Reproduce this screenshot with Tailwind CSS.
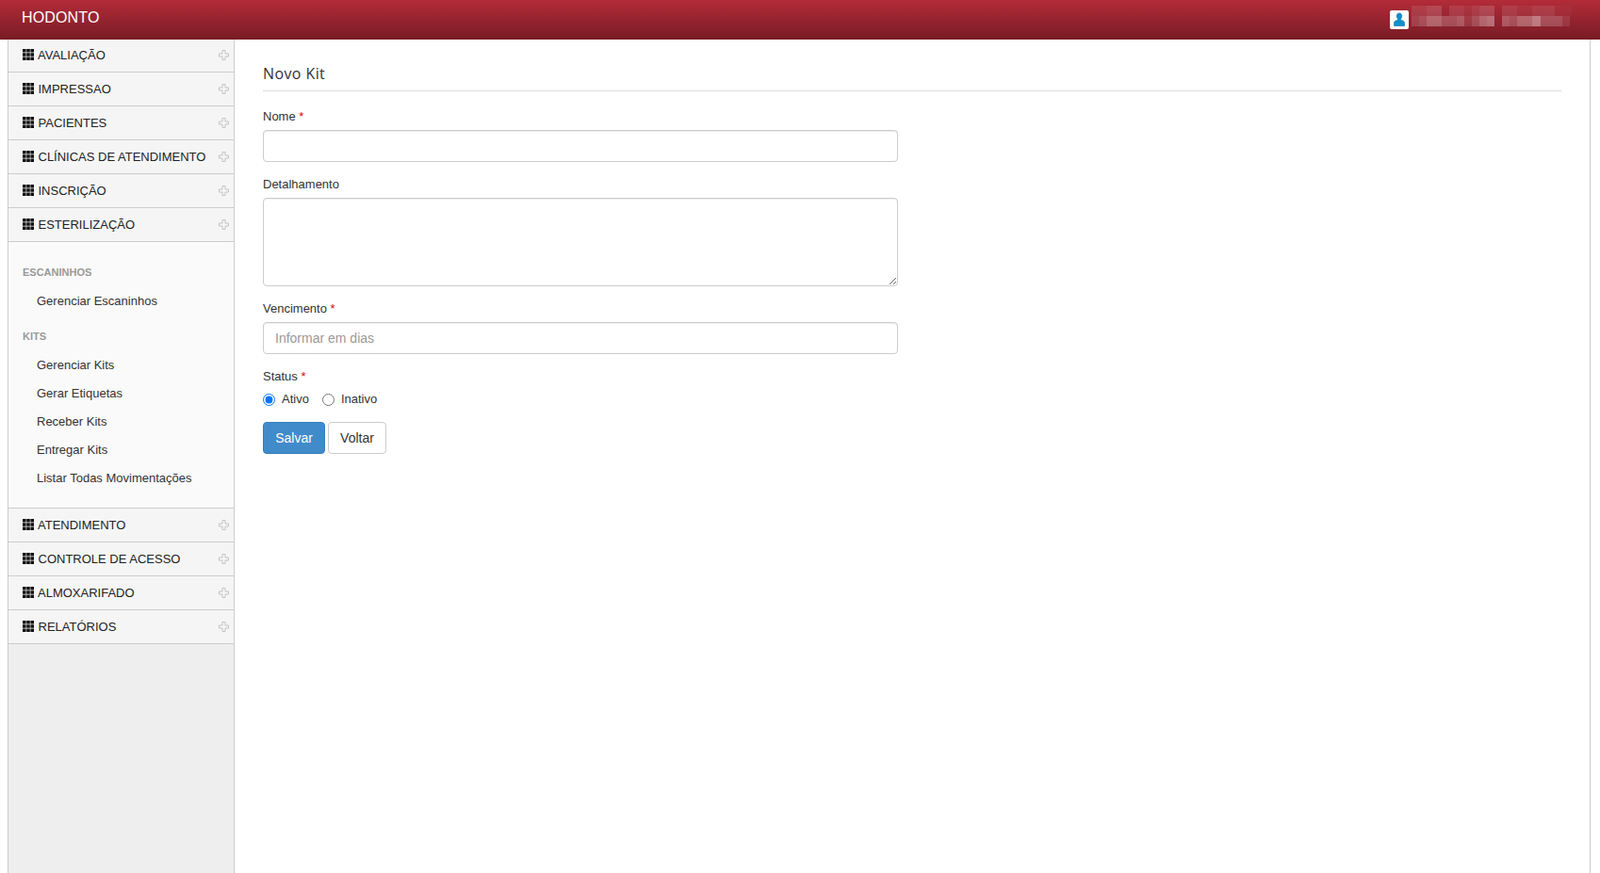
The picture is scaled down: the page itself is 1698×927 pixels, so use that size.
<!DOCTYPE html>
<html lang="pt-BR" class="h-full">
  <head>
    <meta charset="UTF-8" />
    <script src="https://cdn.jsdelivr.net/npm/@tailwindcss/browser@4"></script>
    <title>Novo Kit</title>
  </head>
  <body class="h-full overflow-hidden bg-white font-['Liberation_Sans',Arial,sans-serif] text-[13px] text-[#333]">
    <!-- top bar -->
    <header class="flex h-[42px] items-center justify-between bg-gradient-to-b from-[#b32b39] to-[#781c25] pl-[23px] pr-[30px]">
      <span class="mb-[4px] text-[16px] tracking-[0.15px] text-white">HODONTO</span>
      <div class="flex items-center gap-[3px]">
        <span class="flex h-5 w-5 items-center justify-center rounded-[2px] bg-white">
          <svg class="h-4 w-4" viewBox="0 0 16 16">
            <path d="M8 1c1.700 0 2.700 1.300 2.700 3 0 1.200-.5 2.300-1.200 3v1.200c2 .6 3.800 1.300 4 2.800v3.500H2.500V11c.2-1.500 2-2.200 4-2.800V7C5.800 6.300 5.300 5.200 5.300 4c0-1.700 1-3 2.700-3z" fill="#0f8fcf" stroke="#0b6ea3" stroke-width=".6" />
          </svg>
        </span>
        <!-- blurred user name -->
        <div class="mb-[8px] flex w-[170px] flex-col">
          <div class="flex h-[11px]">
            <i class="w-[16px] bg-white/10"></i><i class="w-[16px] bg-white/15"></i><i class="w-[8px]"></i><i class="w-[16px] bg-white/10"></i><i class="w-[8px] bg-white/5"></i><i class="w-[8px] bg-white/10"></i><i class="w-[16px] bg-white/15"></i><i class="w-[8px]"></i><i class="w-[16px] bg-white/10"></i><i class="w-[16px] bg-white/5"></i><i class="w-[24px] bg-white/10"></i><i class="w-[18px] bg-white/[.03]"></i>
          </div>
          <div class="flex h-[11px]">
            <i class="w-[8px] bg-white/15"></i><i class="w-[8px] bg-white/20"></i><i class="w-[16px] bg-white/30"></i><i class="w-[16px] bg-white/20"></i><i class="w-[8px] bg-white/25"></i><i class="w-[8px] bg-white/10"></i><i class="w-[8px] bg-white/20"></i><i class="w-[8px] bg-white/30"></i><i class="w-[8px] bg-white/35"></i><i class="w-[8px]"></i><i class="w-[8px] bg-white/25"></i><i class="w-[8px] bg-white/20"></i><i class="w-[16px] bg-white/30"></i><i class="w-[9px] bg-white/40"></i><i class="w-[7px] bg-white/20"></i><i class="w-[16px] bg-white/20"></i><i class="w-[8px] bg-white/10"></i>
          </div>
        </div>
      </div>
    </header>

    <div class="flex h-[885px] pl-2">
      <!-- sidebar -->
      <aside class="w-[241px] shrink-0 border-x border-[#ccc] bg-[#eee]">
        <nav>
          <a class="flex h-[35px] items-center justify-between border-b border-[#ccc] bg-[#f5f5f5] pl-[15px] pr-[5px] text-[13px] text-[#222]"><span class="flex items-center gap-[4px]"><svg class="mb-[2px] h-3 w-3" viewBox="0 0 12 12" fill="#111"><path d="M0 0h3.600v3.600H0zM4.200 0h3.600v3.600H4.200zM8.400 0H12v3.600H8.400zM0 4.200h3.600v3.600H0zM4.200 4.200h3.600v3.600H4.200zM8.400 4.200H12v3.600H8.400zM0 8.400h3.600V12H0zM4.200 8.400h3.600V12H4.200zM8.400 8.400H12V12H8.400z"/></svg>AVALIAÇÃO</span><svg class="mb-[1px] h-[11px] w-[11px]" viewBox="0 0 11 11" fill="none" stroke="#c4c4c4"><path d="M4 .5h3v3.500h3.500v3H7v3.500H4V7H.5V4H4z"/></svg></a>
          <a class="flex h-9 items-center justify-between border-b border-[#ccc] bg-[#f5f5f5] pl-[15px] pr-[5px] text-[13px] text-[#222]"><span class="flex items-center gap-[4.500px]"><svg class="mb-[2px] h-3 w-3" viewBox="0 0 12 12" fill="#111"><path d="M0 0h3.600v3.600H0zM4.200 0h3.600v3.600H4.200zM8.400 0H12v3.600H8.400zM0 4.200h3.600v3.600H0zM4.200 4.200h3.600v3.600H4.200zM8.400 4.200H12v3.600H8.400zM0 8.400h3.600V12H0zM4.200 8.400h3.600V12H4.200zM8.400 8.400H12V12H8.400z"/></svg>IMPRESSAO</span><svg class="mb-[1px] h-[11px] w-[11px]" viewBox="0 0 11 11" fill="none" stroke="#c4c4c4"><path d="M4 .5h3v3.500h3.500v3H7v3.500H4V7H.5V4H4z"/></svg></a>
          <a class="flex h-9 items-center justify-between border-b border-[#ccc] bg-[#f5f5f5] pl-[15px] pr-[5px] text-[13px] text-[#222]"><span class="flex items-center gap-[4.500px]"><svg class="mb-[2px] h-3 w-3" viewBox="0 0 12 12" fill="#111"><path d="M0 0h3.600v3.600H0zM4.200 0h3.600v3.600H4.200zM8.400 0H12v3.600H8.400zM0 4.200h3.600v3.600H0zM4.200 4.200h3.600v3.600H4.200zM8.400 4.200H12v3.600H8.400zM0 8.400h3.600V12H0zM4.200 8.400h3.600V12H4.200zM8.400 8.400H12V12H8.400z"/></svg>PACIENTES</span><svg class="mb-[1px] h-[11px] w-[11px]" viewBox="0 0 11 11" fill="none" stroke="#c4c4c4"><path d="M4 .5h3v3.500h3.500v3H7v3.500H4V7H.5V4H4z"/></svg></a>
          <a class="flex h-9 items-center justify-between border-b border-[#ccc] bg-[#f5f5f5] pl-[15px] pr-[5px] text-[13px] text-[#222]"><span class="flex items-center gap-[4.500px]"><svg class="mb-[2px] h-3 w-3" viewBox="0 0 12 12" fill="#111"><path d="M0 0h3.600v3.600H0zM4.200 0h3.600v3.600H4.200zM8.400 0H12v3.600H8.400zM0 4.200h3.600v3.600H0zM4.200 4.200h3.600v3.600H4.200zM8.400 4.200H12v3.600H8.400zM0 8.400h3.600V12H0zM4.200 8.400h3.600V12H4.200zM8.400 8.400H12V12H8.400z"/></svg>CLÍNICAS DE ATENDIMENTO</span><svg class="mb-[1px] h-[11px] w-[11px]" viewBox="0 0 11 11" fill="none" stroke="#c4c4c4"><path d="M4 .5h3v3.500h3.500v3H7v3.500H4V7H.5V4H4z"/></svg></a>
          <a class="flex h-9 items-center justify-between border-b border-[#ccc] bg-[#f5f5f5] pl-[15px] pr-[5px] text-[13px] text-[#222]"><span class="flex items-center gap-[4.500px]"><svg class="mb-[2px] h-3 w-3" viewBox="0 0 12 12" fill="#111"><path d="M0 0h3.600v3.600H0zM4.200 0h3.600v3.600H4.200zM8.400 0H12v3.600H8.400zM0 4.200h3.600v3.600H0zM4.200 4.200h3.600v3.600H4.200zM8.400 4.200H12v3.600H8.400zM0 8.400h3.600V12H0zM4.200 8.400h3.600V12H4.200zM8.400 8.400H12V12H8.400z"/></svg>INSCRIÇÃO</span><svg class="mb-[1px] h-[11px] w-[11px]" viewBox="0 0 11 11" fill="none" stroke="#c4c4c4"><path d="M4 .5h3v3.500h3.500v3H7v3.500H4V7H.5V4H4z"/></svg></a>
          <a class="flex h-9 items-center justify-between border-b border-[#ccc] bg-[#f5f5f5] pl-[15px] pr-[5px] text-[13px] text-[#222]"><span class="flex items-center gap-[4.500px]"><svg class="mb-[2px] h-3 w-3" viewBox="0 0 12 12" fill="#111"><path d="M0 0h3.600v3.600H0zM4.200 0h3.600v3.600H4.200zM8.400 0H12v3.600H8.400zM0 4.200h3.600v3.600H0zM4.200 4.200h3.600v3.600H4.200zM8.400 4.200H12v3.600H8.400zM0 8.400h3.600V12H0zM4.200 8.400h3.600V12H4.200zM8.400 8.400H12V12H8.400z"/></svg>ESTERILIZAÇÃO</span><svg class="mb-[1px] h-[11px] w-[11px]" viewBox="0 0 11 11" fill="none" stroke="#c4c4c4"><path d="M4 .5h3v3.500h3.500v3H7v3.500H4V7H.5V4H4z"/></svg></a>
        </nav>

        <!-- open submenu -->
        <div class="h-[283px] border-b border-[#ccc] bg-[#fafafa] pt-[25px] pl-[15px]">
          <p class="h-[15px] text-[11px] leading-[15px] font-bold text-[#999]">ESCANINHOS</p>
          <a class="mt-[8px] block h-[30px] pl-[15px] text-[13px] leading-[30px] text-[#333]">Gerenciar Escaninhos</a>
          <p class="mt-[15px] h-[15px] text-[11px] leading-[15px] font-bold text-[#999]">KITS</p>
          <a class="mt-[8px] block h-[30px] pl-[15px] text-[13px] leading-[30px] text-[#333]">Gerenciar Kits</a>
          <a class="block h-[30px] pl-[15px] text-[13px] leading-[30px] text-[#333]">Gerar Etiquetas</a>
          <a class="block h-[30px] pl-[15px] text-[13px] leading-[30px] text-[#333]">Receber Kits</a>
          <a class="block h-[30px] pl-[15px] text-[13px] leading-[30px] text-[#333]">Entregar Kits</a>
          <a class="block h-[30px] pl-[15px] text-[13px] leading-[30px] text-[#333]">Listar Todas Movimentações</a>
        </div>

        <nav>
          <a class="flex h-9 items-center justify-between border-b border-[#ccc] bg-[#f5f5f5] pl-[15px] pr-[5px] text-[13px] text-[#222]"><span class="flex items-center gap-[4px]"><svg class="mb-[2px] h-3 w-3" viewBox="0 0 12 12" fill="#111"><path d="M0 0h3.600v3.600H0zM4.200 0h3.600v3.600H4.200zM8.400 0H12v3.600H8.400zM0 4.200h3.600v3.600H0zM4.200 4.200h3.600v3.600H4.200zM8.400 4.200H12v3.600H8.400zM0 8.400h3.600V12H0zM4.200 8.400h3.600V12H4.200zM8.400 8.400H12V12H8.400z"/></svg>ATENDIMENTO</span><svg class="mb-[1px] h-[11px] w-[11px]" viewBox="0 0 11 11" fill="none" stroke="#c4c4c4"><path d="M4 .5h3v3.500h3.500v3H7v3.500H4V7H.5V4H4z"/></svg></a>
          <a class="flex h-9 items-center justify-between border-b border-[#ccc] bg-[#f5f5f5] pl-[15px] pr-[5px] text-[13px] text-[#222]"><span class="flex items-center gap-[4.500px]"><svg class="mb-[2px] h-3 w-3" viewBox="0 0 12 12" fill="#111"><path d="M0 0h3.600v3.600H0zM4.200 0h3.600v3.600H4.200zM8.400 0H12v3.600H8.400zM0 4.200h3.600v3.600H0zM4.200 4.200h3.600v3.600H4.200zM8.400 4.200H12v3.600H8.400zM0 8.400h3.600V12H0zM4.200 8.400h3.600V12H4.200zM8.400 8.400H12V12H8.400z"/></svg>CONTROLE DE ACESSO</span><svg class="mb-[1px] h-[11px] w-[11px]" viewBox="0 0 11 11" fill="none" stroke="#c4c4c4"><path d="M4 .5h3v3.500h3.500v3H7v3.500H4V7H.5V4H4z"/></svg></a>
          <a class="flex h-9 items-center justify-between border-b border-[#ccc] bg-[#f5f5f5] pl-[15px] pr-[5px] text-[13px] text-[#222]"><span class="flex items-center gap-[4px]"><svg class="mb-[2px] h-3 w-3" viewBox="0 0 12 12" fill="#111"><path d="M0 0h3.600v3.600H0zM4.200 0h3.600v3.600H4.200zM8.400 0H12v3.600H8.400zM0 4.200h3.600v3.600H0zM4.200 4.200h3.600v3.600H4.200zM8.400 4.200H12v3.600H8.400zM0 8.400h3.600V12H0zM4.200 8.400h3.600V12H4.200zM8.400 8.400H12V12H8.400z"/></svg>ALMOXARIFADO</span><svg class="mb-[1px] h-[11px] w-[11px]" viewBox="0 0 11 11" fill="none" stroke="#c4c4c4"><path d="M4 .5h3v3.500h3.500v3H7v3.500H4V7H.5V4H4z"/></svg></a>
          <a class="flex h-9 items-center justify-between border-b border-[#ccc] bg-[#f5f5f5] pl-[15px] pr-[5px] text-[13px] text-[#222]"><span class="flex items-center gap-[4.500px]"><svg class="mb-[2px] h-3 w-3" viewBox="0 0 12 12" fill="#111"><path d="M0 0h3.600v3.600H0zM4.200 0h3.600v3.600H4.200zM8.400 0H12v3.600H8.400zM0 4.200h3.600v3.600H0zM4.200 4.200h3.600v3.600H4.200zM8.400 4.200H12v3.600H8.400zM0 8.400h3.600V12H0zM4.200 8.400h3.600V12H4.200zM8.400 8.400H12V12H8.400z"/></svg>RELATÓRIOS</span><svg class="mb-[1px] h-[11px] w-[11px]" viewBox="0 0 11 11" fill="none" stroke="#c4c4c4"><path d="M4 .5h3v3.500h3.500v3H7v3.500H4V7H.5V4H4z"/></svg></a>
        </nav>
      </aside>

      <!-- content -->
      <main class="w-[1439px] shrink-0 border-r border-[#ccc] pl-[30px] pr-[30px] pt-[26px]">
        <h1 class="border-b border-[#ddd] pb-[8px] font-['Open_Sans',sans-serif] text-[16px] leading-[20px] tracking-[0.4px] text-[#333]">Novo Kit</h1>
        <form class="w-[674px] pt-[18px]">
          <label class="block h-[23px] leading-[18px]">Nome <span class="text-red-600">*</span></label>
          <input type="text" class="block h-[34px] w-full rounded border border-[#ccc] px-3 text-[14px] shadow-[inset_0_1px_1px_rgba(0,0,0,0.075)]" />
          <label class="mt-[15px] block h-[23px] leading-[18px]">Detalhamento</label>
          <textarea class="block h-[94px] w-full rounded border border-[#ccc] px-3 py-1.5 text-[14px] shadow-[inset_0_1px_1px_rgba(0,0,0,0.075)]"></textarea>
          <label class="mt-[15px] block h-[23px] leading-[18px]">Vencimento <span class="text-red-600">*</span></label>
          <input type="text" placeholder="Informar em dias" class="block h-[34px] w-full rounded border border-[#ccc] px-3 text-[14px] shadow-[inset_0_1px_1px_rgba(0,0,0,0.075)] placeholder:text-[#999]" />
          <label class="mt-[15px] block h-[20px] leading-[18px]">Status <span class="text-red-600">*</span></label>
          <div class="mt-[1px] flex h-[24px] items-center">
            <input type="radio" name="status" checked class="m-0 h-[13px] w-[13px]" />
            <span class="ml-[7px]">Ativo</span>
            <input type="radio" name="status" class="m-0 ml-[14px] h-[13px] w-[13px]" />
            <span class="ml-[7px]">Inativo</span>
          </div>
          <div class="mt-[12px] flex gap-[3px]">
            <button type="button" class="h-[34px] w-[66px] rounded border border-[#357ebd] bg-[#428bca] text-[14px] text-white">Salvar</button>
            <button type="button" class="h-[34px] w-[62px] rounded border border-[#ccc] bg-white text-[14px] text-[#333]">Voltar</button>
          </div>
        </form>
      </main>
    </div>
  </body>
</html>
